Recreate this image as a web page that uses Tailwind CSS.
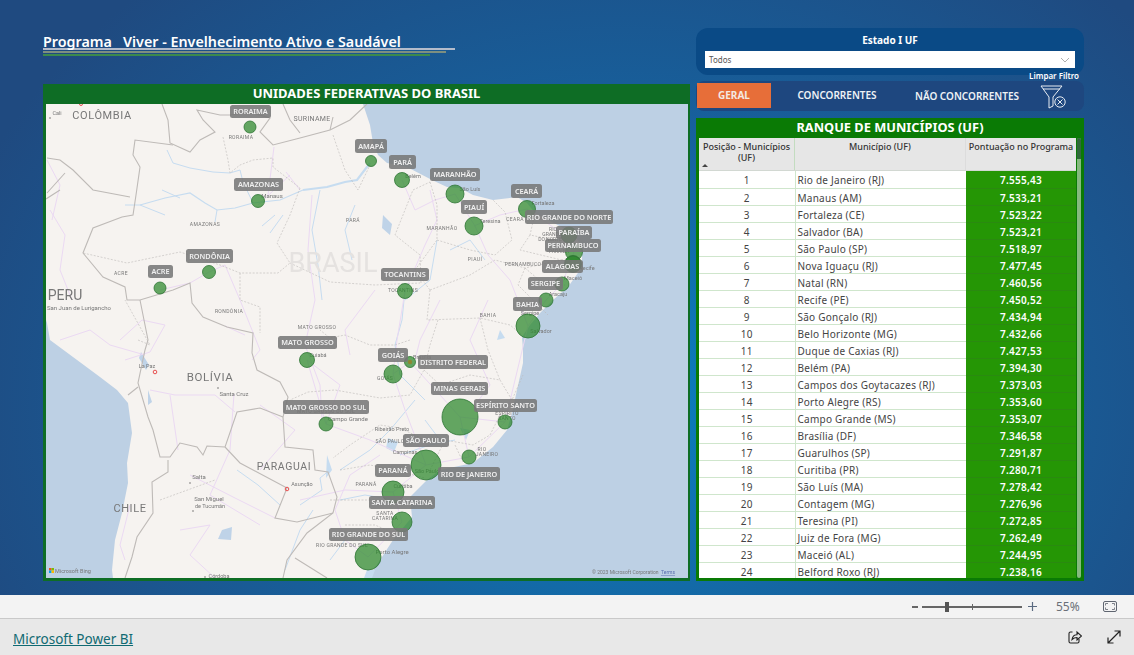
<!doctype html>
<html lang="pt-BR">
<head>
<meta charset="utf-8">
<title>Programa Viver</title>
<script src="https://cdn.jsdelivr.net/npm/@tailwindcss/browser@4"></script>
</head>
<body class="w-[1134px] h-[655px] overflow-hidden font-['Noto_Sans',sans-serif] bg-[#e8e8e8]">
<div class="flex flex-col h-[655px]">
  <main class="relative h-[595px] flex pl-[43px] gap-[6px] bg-[radial-gradient(ellipse_700px_560px_at_620px_400px,#0a80c0_0%,#17609c_50%,#1f4a80_100%)]">
    <!-- left column -->
    <section class="w-[647px] flex flex-col">
      <div class="h-[84px] pt-[33px]">
        <h1 class="text-[14.3px] leading-[18px] font-semibold text-white whitespace-pre">Programa   Viver - Envelhecimento Ativo e Saudável</h1>
        <div class="-mt-[3px] h-[1.5px] w-[412px] bg-[#b4bccb]"></div>
        <div class="mt-[1.5px] h-[2px] w-[403px] bg-[#7d8f80]"></div>
        <div class="mt-[1px] h-[2px] w-[387px] bg-[#3c8a4c]"></div>
      </div>
      <div class="h-[497px] bg-[#0e6d25] flex flex-col px-[3px] pb-[3px]">
        <h2 class="h-[20px] leading-[18px] text-center text-[13px] font-bold text-white">UNIDADES FEDERATIVAS DO BRASIL</h2>
        <svg class="block w-[642px] h-[474px] blur-[0.35px] font-['Roboto',sans-serif]" viewBox="46 104 642 474" xmlns="http://www.w3.org/2000/svg">
          <rect x="46" y="104" width="642" height="474" fill="#bdd0e4"/>
          <path fill="#f6f3f0" d="M46 104H363L370 125L373 143L378 155L387 163L407 167L432 180L447 187L460 188L473 195L493 200L517 197L527 203L535 213L552 222L567 230L578 240L582 250L582 262L580 270L568 287L553 300L540 313L530 325L522 337L523 350L523 363L517 390L512 413L507 430L493 447L473 463L440 470L427 480L410 497L412 517L393 540L380 560L368 578H113L112 570L115 540L122 513L128 483L127 463L132 433L128 403L117 390L100 377L73 357L50 340L47 323L46 320Z"/>
          <!-- rivers -->
          <g fill="none" stroke="#c6dcf0" stroke-width="1">
            <path d="M140 205L165 198L190 193L205 203L217 210L235 208L253 203L280 200L303 190" stroke-width="1.2"/>
            <path d="M303 190L327 187L345 182L357 180L370 163" stroke-width="2.2"/>
            <path d="M167 150L173 163L190 168L213 172L230 173L240 170L243 182L253 203"/>
            <path d="M162 190L180 198M125 205L140 205L165 215M217 210L215 222M275 215L262 226M283 215L270 233"/>
            <path d="M320 190L312 230L318 265L322 300M355 205L345 230L352 260"/>
            <path d="M405 290L402 320L395 345L400 375L425 400M437 240L430 280L405 300M485 260L470 240L450 250"/>
            <path d="M330 470L320 478L322 490L300 505M237 470L258 485L280 505M415 400L390 430L370 450L340 470M425 420L440 440M455 440L430 445L400 455"/>
            <path d="M285 570L300 530L313 510M340 500L365 495L395 500M345 540L330 560"/>
          </g>
          <path fill="#bfd3e8" d="M222 530L232 527L231 540L218 539ZM383 215L392 224L390 235L382 228ZM148 390L152 402L148 405ZM141 352L149 365L146 370L139 358Z"/>
          <path fill="#c6dcf0" d="M388 438L398 442L394 452L386 448ZM460 428L470 430L466 440ZM327 455L332 470L326 478ZM500 330L505 338L497 340ZM367 570L375 570L372 578L364 578Z"/>
          <!-- roads -->
          <g fill="none" stroke="#ebd9f3" stroke-width="1">
            <path d="M47 160L60 185L52 220M50 210L65 235L60 270L72 300M120 340L142 320L165 325L150 352L125 360M60 340L90 330L110 345L145 355"/>
            <path d="M274 147L268 195M258 205L290 175M286 172L300 190"/>
            <path d="M312 195L308 250L315 300L305 345L320 385L322 420"/>
            <path d="M160 290L190 283L209 272L225 265L240 300L260 350L252 360M225 326L245 335"/>
            <path d="M402 180L415 210L435 200L455 194L475 226L488 255L510 280L528 326M474 226L500 215L527 209L560 232L574 252L562 284L546 300L528 326"/>
            <path d="M430 190L437 220L425 245L405 291L397 340L393 374L405 410L426 465L393 492L402 522L368 557"/>
            <path d="M528 326L515 380L505 422L469 457L426 465M460 417L469 457M460 417L505 422M410 362L460 417M393 374L410 362M307 360L326 424L370 440L426 465M326 424L340 385L307 360"/>
            <path d="M380 455L350 475L335 510L345 540L368 557M300 500L345 490L393 492"/>
            <path d="M235 412L215 395L175 395L150 390M234 394L230 450L210 495L260 525M190 475L235 498L275 518M180 530L210 525L190 555L215 578M260 405L295 430L260 470"/>
            <path d="M130 505L120 545L125 560M170 395L178 450"/>
            <path d="M375 290L345 330L350 355M440 300L420 340L415 360M488 300L470 340L490 385L475 405"/>
          </g>
          <!-- state borders -->
          <g fill="none" stroke="#bcb9b7" stroke-width=".6" stroke-dasharray="2 1.5">
            <path d="M223 137L228 160L230 173L240 165L253 160L273 158L273 167L300 188"/>
            <path d="M300 188L290 215L277 243L290 263L278 273L240 273L220 265L180 252L127 263L83 253"/>
            <path d="M240 273L240 300L260 307L260 333"/>
            <path d="M290 263L330 282L375 285L420 283"/>
            <path d="M333 135L345 170L358 190L370 165"/>
            <path d="M421 283L420 255L395 235L413 190L430 182"/>
            <path d="M430 182L437 205L437 240L415 270L430 290M437 240L470 250L495 255L512 240L505 212L493 200"/>
            <path d="M430 290L470 275L495 260L525 268L570 258M535 213L530 235L555 240L580 250M530 235L520 250L570 262M525 268L545 285L565 285M525 268L518 285L538 305L548 315"/>
            <path d="M430 290L427 320L480 318L510 325L522 335M438 320L430 345L424 370L410 395L380 398L335 390L308 392L290 400M410 340L395 345L370 345L345 335L330 338L320 330"/>
            <path d="M424 370L440 385L470 375L500 380L512 400L523 375M480 318L488 350L500 380"/>
            <path d="M505 405L490 435L473 445L445 440L425 440L400 428L380 425L350 445L333 458M445 440L430 470M455 445L463 462"/>
            <path d="M340 470L370 465L395 470L425 478M330 500L375 500L410 505M345 525L375 525L398 535"/>
            <path d="M138 340L150 345L125 300M160 500L215 480"/>
          </g>
          <!-- country borders -->
          <g fill="none" stroke="#bebab7" stroke-width="1.1">
            <path d="M162 104L168 120L170 143L190 152L200 140L215 132L203 120L197 110L220 115L230 115L250 112L270 118L260 132L273 145L300 138L330 130L350 120L367 104"/>
            <path d="M283 104L290 120L300 133M333 117L330 130"/>
            <path d="M173 145L135 140L133 155L140 167L136 195L133 215L122 217L93 228L83 253L103 277L125 287L127 300L140 300L173 290L190 283L192 303L203 317L227 327L253 333L252 353L257 370L280 382L288 397L283 417L285 447L313 450L315 470L328 472L337 497L333 513L307 533L287 560L283 578"/>
            <path d="M283 417L260 408L237 412L225 447L240 463L287 488L275 518L297 522L333 513M225 447L207 446L203 455L197 447L180 443L170 457L160 457L153 430L148 417L138 383L145 350L148 340L140 300M128 395L138 387M168 460L168 472L152 482L153 513L137 537L132 557L125 578M295 558L327 578"/>
            <path d="M47 158L60 160L73 170L93 190L130 197M47 193L65 173M46 199L60 190"/>
          </g>
          <!-- map labels -->
          <g fill="#777" text-anchor="middle" font-size="6">
            <text x="102" y="119" font-size="11" letter-spacing=".6">COLÔMBIA</text>
            <text x="57" y="115" font-size="5.5">Cali</text>
            <text x="312" y="121" font-size="7" letter-spacing=".3">SURINAME</text>
            <text x="241" y="139" font-size="5" letter-spacing=".4">RORAIMA</text>
            <text x="272" y="198" font-size="6">Manaus</text>
            <text x="205" y="226" font-size="5" letter-spacing=".4">AMAZONAS</text>
            <text x="353" y="222" font-size="5" letter-spacing=".4">PARÁ</text>
            <text x="333" y="272" font-size="27" fill="#e5e2e0">BRASIL</text>
            <text x="121" y="275" font-size="5" letter-spacing=".4">ACRE</text>
            <text x="65" y="300" font-size="14">PERU</text>
            <text x="79" y="310" font-size="6">San Juan de Lurigancho</text>
            <text x="229" y="313" font-size="5" letter-spacing=".4">RONDÔNIA</text>
            <text x="317" y="329" font-size="5" letter-spacing=".4">MATO GROSSO</text>
            <text x="147" y="368" font-size="5.5">La Paz</text>
            <text x="210" y="381" font-size="11.5" letter-spacing=".6">BOLÍVIA</text>
            <text x="234" y="396" font-size="6">Santa Cruz</text>
            <text x="284" y="470" font-size="10.5" letter-spacing=".6">PARAGUAI</text>
            <text x="199" y="479" font-size="6">Salta</text>
            <text x="209" y="501" font-size="6">San Miguel</text>
            <text x="210" y="508" font-size="5.5">de Tucumán</text>
            <text x="130" y="512" font-size="11" letter-spacing=".6">CHILE</text>
            <text x="302" y="486" font-size="5.5">Asunção</text>
            <text x="219" y="577.500" font-size="5.5">Córdoba</text>
            <text x="326" y="413" font-size="5" letter-spacing=".3">MATO GROSSO DO SUL</text>
            <text x="348" y="421" font-size="6">Campo Grande</text>
            <text x="318" y="357" font-size="5.5">Cuiabá</text>
            <text x="413" y="178" font-size="5.5">Belém</text>
            <text x="470" y="191" font-size="5.5">São Luís</text>
            <text x="490" y="223" font-size="5.5">Teresina</text>
            <text x="442" y="230" font-size="5" letter-spacing=".4">MARANHÃO</text>
            <text x="515" y="221" font-size="5" letter-spacing=".4">CEARÁ</text>
            <text x="543" y="205" font-size="5.5">Fortaleza</text>
            <text x="475" y="261" font-size="5" letter-spacing=".4">PIAUÍ</text>
            <text x="523" y="266" font-size="5" letter-spacing=".3">PERNAMBUCO</text>
            <text x="403" y="292" font-size="5" letter-spacing=".3">TOCANTINS</text>
            <text x="488" y="317" font-size="5" letter-spacing=".4">BAHIA</text>
            <text x="541" y="333" font-size="5.5">Salvador</text>
            <text x="530" y="315" font-size="5.5">Sergipe</text>
            <text x="573" y="280" font-size="5.5">Maceió</text>
            <text x="558" y="296" font-size="5.5">Aracaju</text>
            <text x="587" y="270" font-size="5.5">Recife</text>
            <text x="553" y="231" font-size="5">RIO</text>
            <text x="552" y="236" font-size="5">GRANDE</text>
            <text x="550" y="241" font-size="5">DO NORTE</text>
            <text x="559" y="253" font-size="5">PARAÍBA</text>
            <text x="392" y="431" font-size="5.5">Ribeirão Preto</text>
            <text x="390" y="443" font-size="5" letter-spacing=".3">SÃO PAULO</text>
            <text x="405" y="454" font-size="5.5">Campinas</text>
            <text x="427" y="473" font-size="5.5">São Paulo</text>
            <text x="403" y="488" font-size="5.5">Curitiba</text>
            <text x="366" y="486" font-size="5" letter-spacing=".3">PARANÁ</text>
            <text x="385" y="515" font-size="5" letter-spacing=".3">SANTA</text>
            <text x="385" y="520" font-size="5" letter-spacing=".3">CATARINA</text>
            <text x="392" y="554" font-size="6">Porto Alegre</text>
            <text x="342" y="547" font-size="5" letter-spacing=".3">RIO GRANDE DO SUL</text>
            <text x="507" y="415" font-size="5" letter-spacing=".3">ESPÍRITO</text>
            <text x="507" y="420" font-size="5" letter-spacing=".3">SANTO</text>
            <text x="482" y="451" font-size="5" letter-spacing=".3">RIO</text>
            <text x="487" y="456" font-size="5" letter-spacing=".3">JANEIRO</text>
            <text x="422" y="359" font-size="5.5">Brasília</text>
            <text x="385" y="380" font-size="5" letter-spacing=".3">GOIÁS</text>
          </g>
          <g fill="none" stroke="#e85050" stroke-width="1"><circle cx="155" cy="372" r="1.8"/><circle cx="287" cy="489" r="1.8"/><circle cx="81" cy="104" r="1.5"/></g>
          <g fill="#555"><circle cx="218" cy="388" r=".7"/><circle cx="190" cy="483" r=".7"/><circle cx="193" cy="511" r=".7"/><circle cx="205" cy="577" r=".7"/><circle cx="50" cy="118" r=".7"/></g>
          <!-- bubbles -->
          <g fill="#2f8a2f" fill-opacity=".74" stroke="#2f7535" stroke-width=".8">
            <circle cx="250" cy="127" r="6"/><circle cx="258" cy="201" r="6.5"/><circle cx="209" cy="272" r="6.5"/><circle cx="160" cy="288" r="6"/>
            <circle cx="371" cy="161" r="5.5"/><circle cx="402" cy="180" r="7.5"/><circle cx="455" cy="194" r="9"/><circle cx="474" cy="226" r="9"/>
            <circle cx="527" cy="209" r="8.5"/><circle cx="569" cy="235" r="8"/><circle cx="569" cy="235" r="7.5"/><circle cx="574" cy="252" r="8.5"/>
            <circle cx="573" cy="264" r="8.5"/><circle cx="573" cy="264" r="8"/><circle cx="562" cy="284" r="7"/><circle cx="546" cy="300" r="7"/><circle cx="528" cy="326" r="12"/>
            <circle cx="405" cy="291" r="7.5"/><circle cx="307" cy="360" r="7.5"/><circle cx="326" cy="424" r="7"/><circle cx="393" cy="374" r="9"/>
            <circle cx="410" cy="362" r="5.5"/><circle cx="460" cy="417" r="18"/><circle cx="505" cy="422" r="7"/><circle cx="426" cy="465" r="15"/>
            <circle cx="469" cy="457" r="7"/><circle cx="393" cy="492" r="11"/><circle cx="402" cy="522" r="10"/><circle cx="368" cy="557" r="13"/>
          </g>
          <circle cx="410" cy="362" r="2.2" fill="#a07a20" fill-opacity=".7"/>
          <!-- bubble labels -->
          <g fill="#777" fill-opacity=".88">
            <rect x="230" y="105" width="41" height="13" rx="2.500"/><rect x="234" y="178" width="49" height="13" rx="2.500"/><rect x="186" y="249" width="47" height="14" rx="2.500"/>
            <rect x="148" y="265" width="25" height="13" rx="2.500"/><rect x="355" y="139" width="32" height="14" rx="2.500"/><rect x="389" y="155" width="27" height="14" rx="2.500"/>
            <rect x="430" y="168" width="50" height="13" rx="2.500"/><rect x="461" y="200" width="26" height="14" rx="2.500"/><rect x="511" y="184" width="31" height="14" rx="2.500"/>
            <rect x="525" y="210" width="88" height="14" rx="2.500"/><rect x="556" y="226" width="36" height="13" rx="2.500"/><rect x="545" y="239" width="56" height="13" rx="2.500"/>
            <rect x="542" y="260" width="41" height="13" rx="2.500"/><rect x="528" y="277" width="35" height="13" rx="2.500"/><rect x="513" y="297" width="29" height="14" rx="2.500"/>
            <rect x="381" y="268" width="48" height="13" rx="2.500"/><rect x="278" y="336" width="59" height="13" rx="2.500"/><rect x="283" y="400" width="86" height="14" rx="2.500"/>
            <rect x="378" y="348" width="30" height="14" rx="2.500"/><rect x="418" y="355" width="70" height="14" rx="2.500"/><rect x="431" y="382" width="57" height="13" rx="2.500"/>
            <rect x="474" y="399" width="63" height="13" rx="2.500"/><rect x="403" y="434" width="46" height="13" rx="2.500"/><rect x="438" y="467" width="62" height="14" rx="2.500"/>
            <rect x="375" y="464" width="36" height="13" rx="2.500"/><rect x="369" y="496" width="66" height="13" rx="2.500"/><rect x="329" y="528" width="79" height="13" rx="2.500"/>
          </g>
          <g fill="#f0f0f0" text-anchor="middle" font-size="7.3" font-weight="600" class="font-['Noto_Sans',sans-serif]">
            <text x="250.500" y="114.300">RORAIMA</text><text x="258.500" y="187.300">AMAZONAS</text><text x="209.500" y="258.700">RONDÔNIA</text>
            <text x="160.500" y="274.300">ACRE</text><text x="371" y="148.700">AMAPÁ</text><text x="402.500" y="164.700">PARÁ</text>
            <text x="455" y="177.300">MARANHÃO</text><text x="474" y="209.700">PIAUÍ</text><text x="526.500" y="193.700">CEARÁ</text>
            <text x="569" y="219.700">RIO GRANDE DO NORTE</text><text x="574" y="235.300">PARAÍBA</text><text x="573" y="248.300">PERNAMBUCO</text>
            <text x="562.500" y="269.300">ALAGOAS</text><text x="545.500" y="286.300">SERGIPE</text><text x="527.500" y="306.700">BAHIA</text>
            <text x="405" y="277.300">TOCANTINS</text><text x="307.500" y="345.300">MATO GROSSO</text><text x="326" y="409.700">MATO GROSSO DO SUL</text>
            <text x="393" y="357.700">GOIÁS</text><text x="453" y="364.700">DISTRITO FEDERAL</text><text x="459.500" y="391.300">MINAS GERAIS</text>
            <text x="505.500" y="408.300">ESPÍRITO SANTO</text><text x="426" y="443.300">SÃO PAULO</text><text x="469" y="476.700">RIO DE JANEIRO</text>
            <text x="393" y="473.300">PARANÁ</text><text x="402" y="505.300">SANTA CATARINA</text><text x="368.500" y="537.300">RIO GRANDE DO SUL</text>
          </g>
          <!-- attribution -->
          <g>
            <rect x="49" y="568" width="2.500" height="2.500" fill="#f25022"/><rect x="51.500" y="568" width="2.500" height="2.500" fill="#7fba00"/>
            <rect x="49" y="570.500" width="2.500" height="2.500" fill="#00a4ef"/><rect x="51.500" y="570.500" width="2.500" height="2.500" fill="#ffb900"/>
            <text x="55" y="573" font-size="5.500" fill="#777">Microsoft Bing</text>
            <text x="592" y="574" font-size="5" fill="#777">© 2023 Microsoft Corporation</text>
            <text x="661" y="574" font-size="5" fill="#5a6fb0" text-decoration="underline">Terms</text>
          </g>
        </svg>
      </div>
    </section>
    <!-- right column -->
    <section class="w-[389px] flex flex-col pt-[28px] relative">
      <div class="h-[47px] rounded-[12px] bg-[#0a4a86] flex flex-col items-center px-[9px] mr-[1px]">
        <div class="h-[23px] leading-[24px] text-[10px] font-bold text-white">Estado I UF</div>
        <div class="w-full h-[17px] bg-white flex items-center justify-between pl-[4px] pr-[5px]">
          <span class="text-[8px] text-[#555]">Todos</span>
          <svg width="10" height="6" viewBox="0 0 10 6" fill="none" stroke="#9a9a9a" stroke-width=".8"><path d="M1 1l4 4 4-4"/></svg>
        </div>
      </div>
      <div class="absolute right-[6px] top-[69px] text-[8px] leading-[13px] font-semibold text-white">Limpar Filtro</div>
      <div class="mt-[6px] h-[30px] mr-[1px] rounded-[8px] bg-[#1e477f] flex items-start pt-[2px] pl-[1px]">
        <div class="w-[74px] h-[25px] bg-[#e76e39] flex items-center justify-center text-[10px] font-bold text-[#f4e9e2]">GERAL</div>
        <div class="w-[132px] h-[25px] flex items-center justify-center text-[10px] font-semibold text-[#eef2f6]">CONCORRENTES</div>
        <div class="w-[128px] h-[25px] pt-[1px] flex items-center justify-center text-[10px] font-semibold text-[#eef2f6]">NÃO CONCORRENTES</div>
        <svg class="ml-[9px] mt-[1px]" width="28" height="25" viewBox="0 0 28 25" fill="none" stroke="#e8edf3" stroke-width="1"><path d="M1 2H22M1 2L9 13V24L13 22V13L22 2M3 5H20"/><circle cx="20" cy="18" r="5.200"/><path d="M17.500 15.500l5 5M22.500 15.500l-5 5"/></svg>
      </div>
      <div class="mt-[7px] h-[463px] mr-[1px] bg-[#0a7a05] flex flex-col px-[3px] pb-[3px]">
        <h2 class="h-[20px] leading-[19px] text-center text-[12.8px] font-bold text-white">RANQUE DE MUNICÍPIOS (UF)</h2>
        <div class="flex h-[440px] overflow-hidden">
          <div class="w-[377px] bg-white">
            <div class="grid grid-cols-[96px_171px_110px] h-[33px] bg-[#e6e6e6] border-b border-[#d2d8d2] text-[9px] leading-[11px] text-center font-medium text-[#333]">
              <div class="relative pt-[3px] border-r border-[#c3dcc0] whitespace-nowrap">Posição - Municípios<br>(UF)<span class="absolute left-[3px] bottom-[3px] w-0 h-0 border-x-[3px] border-x-transparent border-b-[3px] border-b-[#444]"></span></div>
              <div class="pt-[3px] border-r border-[#dcdcdc]">Município (UF)</div>
              <div class="pt-[3px] whitespace-nowrap">Pontuação no Programa</div>
            </div>
            <table class="w-[377px] table-fixed text-[10px] tracking-[.25px] text-[#444] [&_td]:h-[17px] [&_td]:pt-[3px] [&_td]:pb-0 [&_td]:px-0 [&_td]:align-top [&_td]:leading-[13px] [&_td]:border-b [&_td]:border-[#cfe6cc] [&_td:nth-child(1)]:w-[96px] [&_td:nth-child(1)]:text-center [&_td:nth-child(1)]:border-r [&_td:nth-child(2)]:w-[171px] [&_td:nth-child(2)]:pl-[2px] [&_td:nth-child(3)]:w-[110px] [&_td:nth-child(3)]:text-center [&_td:nth-child(3)]:bg-[#259605] [&_td:nth-child(3)]:border-[#2a8a10] [&_td:nth-child(3)]:text-white [&_td:nth-child(3)]:font-semibold">
              <tbody>
                <tr><td>1</td><td>Rio de Janeiro (RJ)</td><td>7.555,43</td></tr>
                <tr><td>2</td><td>Manaus (AM)</td><td>7.533,21</td></tr>
                <tr><td>3</td><td>Fortaleza (CE)</td><td>7.523,22</td></tr>
                <tr><td>4</td><td>Salvador (BA)</td><td>7.523,21</td></tr>
                <tr><td>5</td><td>São Paulo (SP)</td><td>7.518,97</td></tr>
                <tr><td>6</td><td>Nova Iguaçu (RJ)</td><td>7.477,45</td></tr>
                <tr><td>7</td><td>Natal (RN)</td><td>7.460,56</td></tr>
                <tr><td>8</td><td>Recife (PE)</td><td>7.450,52</td></tr>
                <tr><td>9</td><td>São Gonçalo (RJ)</td><td>7.434,94</td></tr>
                <tr><td>10</td><td>Belo Horizonte (MG)</td><td>7.432,66</td></tr>
                <tr><td>11</td><td>Duque de Caxias (RJ)</td><td>7.427,53</td></tr>
                <tr><td>12</td><td>Belém (PA)</td><td>7.394,30</td></tr>
                <tr><td>13</td><td>Campos dos Goytacazes (RJ)</td><td>7.373,03</td></tr>
                <tr><td>14</td><td>Porto Alegre (RS)</td><td>7.353,60</td></tr>
                <tr><td>15</td><td>Campo Grande (MS)</td><td>7.353,07</td></tr>
                <tr><td>16</td><td>Brasília (DF)</td><td>7.346,58</td></tr>
                <tr><td>17</td><td>Guarulhos (SP)</td><td>7.291,87</td></tr>
                <tr><td>18</td><td>Curitiba (PR)</td><td>7.280,71</td></tr>
                <tr><td>19</td><td>São Luís (MA)</td><td>7.278,42</td></tr>
                <tr><td>20</td><td>Contagem (MG)</td><td>7.276,96</td></tr>
                <tr><td>21</td><td>Teresina (PI)</td><td>7.272,85</td></tr>
                <tr><td>22</td><td>Juiz de Fora (MG)</td><td>7.262,49</td></tr>
                <tr><td>23</td><td>Maceió (AL)</td><td>7.244,95</td></tr>
                <tr><td>24</td><td>Belford Roxo (RJ)</td><td>7.238,16</td></tr>
              </tbody>
            </table>
          </div>
          <div class="ml-[1px] w-[4px] flex flex-col rounded-full overflow-hidden bg-[#86b97f]">
            <div class="h-[21px] bg-[#30683a]"></div>
          </div>
        </div>
      </div>
    </section>
  </main>
  <!-- zoom bar -->
  <div class="h-[24px] bg-[#f3f3f3] border-b border-[#c9c9c9] flex items-center pl-[912px] text-[#666]">
    <span class="w-[6px] h-[2px] bg-[#666]"></span>
    <div class="relative ml-[4px] w-[100px] h-[2px] bg-[#666]">
      <span class="absolute left-[23px] -top-[4px] w-[4px] h-[10px] bg-[#555]"></span>
      <span class="absolute left-[50px] -top-[2px] w-px h-[6px] bg-[#666]"></span>
    </div>
    <svg class="ml-[6px]" width="9" height="9" viewBox="0 0 9 9" stroke="#5a6a80" stroke-width="1.200"><path d="M0 4.500H9M4.500 0V9"/></svg>
    <span class="ml-[19px] text-[12px] leading-none text-[#6a7078]">55%</span>
    <svg class="ml-[23px]" width="14" height="11" viewBox="0 0 14 11" fill="none" stroke="#5f6570"><rect x=".5" y=".5" width="13" height="10" rx="1.500"/><path d="M2.500 4.500V2.500H5M9 2.500H11.500V4.500M11.500 6.500V8.500H9M5 8.500H2.500V6.500" stroke-width=".8"/></svg>
  </div>
  <!-- footer -->
  <footer class="flex-1 bg-[#e8e8e8] flex items-center pl-[13px]">
    <a class="mt-[4px] text-[13.5px] leading-[18px] text-[#106a72] underline" href="#">Microsoft Power BI</a>
    <svg class="ml-[935px]" width="14" height="14" viewBox="0 0 14 14" fill="none" stroke="#222" stroke-width="1.100"><path d="M4.500 2H2.500C1.500 2 1 2.500 1 3.500V11.500C1 12.500 1.500 13 2.500 13H9.500C10.500 13 11 12.500 11 11.500V9"/><path d="M4 9.500C4.500 6.500 6.500 4.800 9 4.800V2L13.500 6L9 10V7.500C7 7.500 5.500 8 4 9.500Z"/></svg>
    <svg class="ml-[25px]" width="14" height="14" viewBox="0 0 14 14" fill="none" stroke="#222" stroke-width="1.200"><path d="M1 13L13 1M7.500 1H13V6.500M1 7.500V13H6.500"/></svg>
  </footer>
</div>
</body>
</html>
